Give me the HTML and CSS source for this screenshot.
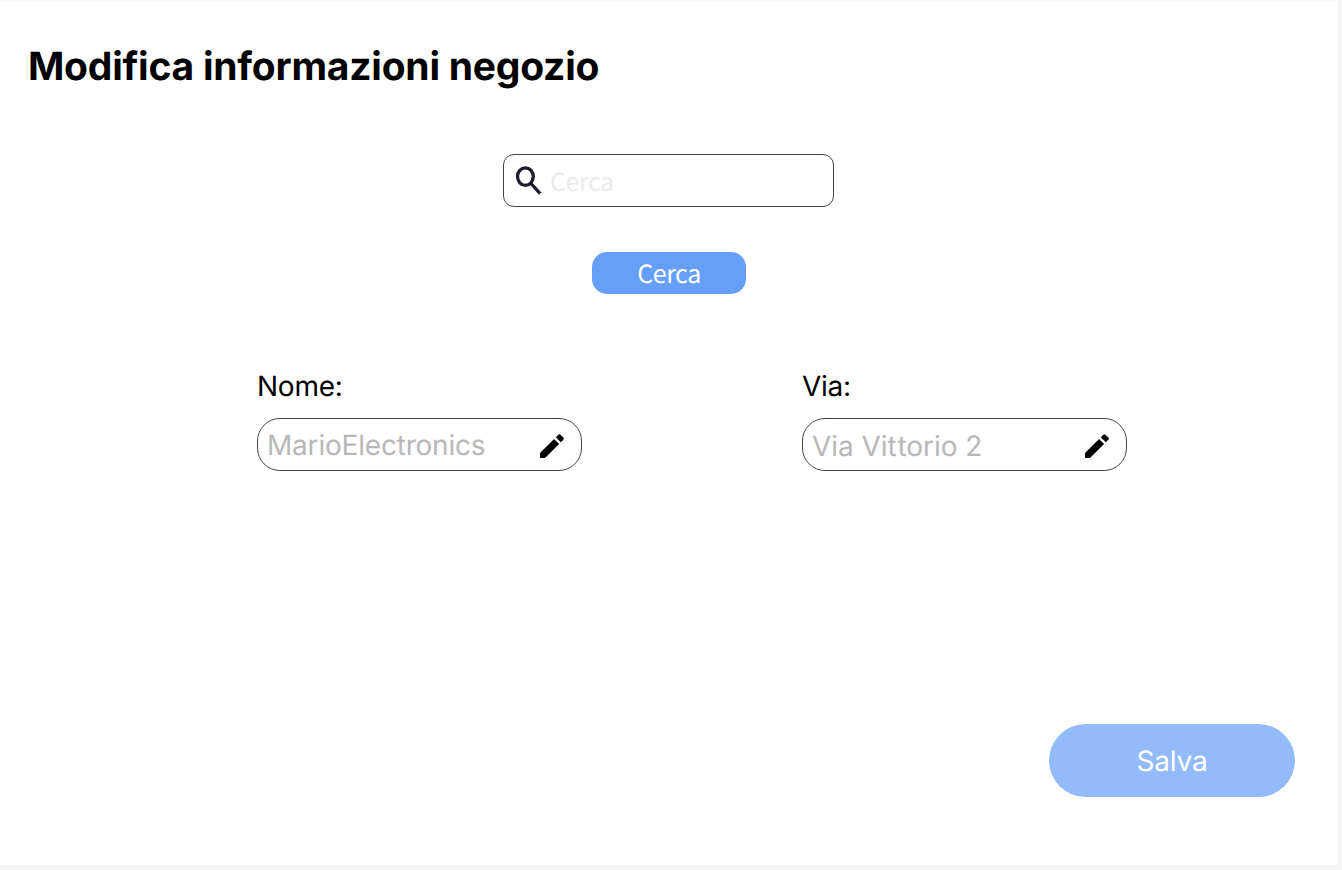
FILE: index.html
```html
<!DOCTYPE html>
<html lang="it">
<head>
<meta charset="utf-8">
<title>Modifica informazioni negozio</title>
<link rel="stylesheet" href="styles.css">
</head>
<body>
<main class="page">
  <h1 class="title">Modifica informazioni negozio</h1>
  <div class="search">
    <svg class="search-icon" viewBox="0 0 28 30" fill="none" stroke="#1d1b2e"><ellipse cx="10.4" cy="11.6" rx="7.9" ry="8.8" stroke-width="3.3"/><path d="M15.5 18L25.2 28.7" stroke-width="3.3"/></svg>
    <span class="search-text">Cerca</span>
  </div>
  <button class="search-button">Cerca</button>
  <div class="fields">
    <div class="field">
      <div class="label">Nome:</div>
      <div class="input"><span class="value">MarioElectronics</span>
        <svg class="pencil" viewBox="3 3 18 18"><path d="M3 17.25V20.3Q3 21 3.7 21H6.75L17.3 10.45l-3.75-3.75zM20.5 7.25q.8-.8 0-1.6l-2.15-2.15q-.8-.8-1.6 0l-1.9 1.9 3.75 3.75z"/></svg></div>
    </div>
    <div class="field">
      <div class="label">Via:</div>
      <div class="input"><span class="value address">Vi<span>a Vi</span><span class="loose">t</span>torio 2</span>
        <svg class="pencil" viewBox="3 3 18 18"><path d="M3 17.25V20.3Q3 21 3.7 21H6.75L17.3 10.45l-3.75-3.75zM20.5 7.25q.8-.8 0-1.6l-2.15-2.15q-.8-.8-1.6 0l-1.9 1.9 3.75 3.75z"/></svg></div>
    </div>
  </div>
  <button class="save">Salva</button>
</main>
</body>
</html>
```
FILE: styles.css
```css
* { box-sizing: border-box; }
body { margin: 0; background: #f5f5f5; font-family: Inter, sans-serif; color: #000; text-rendering: geometricPrecision; }
button { text-rendering: inherit; }
.page { width: 1338px; height: 865px; background: #fff; border-top: 1px solid #f9f9f9; display: flex; flex-direction: column; overflow: hidden; }
.title { margin: 42px 0 0 28px; font-size: 39px; line-height: 48px; font-weight: 700; letter-spacing: -0.23px; white-space: nowrap; }
.search { margin: 63px 0 0 503px; width: 331px; height: 53px; flex: none; border: 1px solid #444; border-radius: 11px; display: flex; align-items: center; padding-left: 11px; }
.search-icon { width: 28px; height: 30px; margin-top: -2px; }
.search-text { margin-left: 7px; font: 400 25px/36px "Noto Sans CJK SC", sans-serif; letter-spacing: -0.45px; color: #ebebeb; }
.search-button { margin: 45px 0 0 592px; width: 154px; height: 42px; flex: none; border: 0; border-radius: 15px; background: #669ff9; color: #fff; font: 400 25px/36px "Noto Sans CJK SC", sans-serif; letter-spacing: -0.45px; padding: 0; }
.fields { display: flex; gap: 220px; margin: 75px 0 0 257px; }
.field { width: 325px; }
.label { font-size: 28px; line-height: 34px; letter-spacing: -0.25px; }
.input { margin-top: 15px; height: 53px; border: 1px solid #444; border-radius: 23px; display: flex; align-items: center; justify-content: space-between; padding: 0 17px 0 9px; font-size: 28px; color: #b8b8b8; }
.value { letter-spacing: -0.2px; }
.address { padding-top: 2px; letter-spacing: -0.05px; }
.loose { letter-spacing: 0.8px; }
.pencil { width: 24px; height: 24px; margin-top: 3px; fill: #000; }
.save { margin: 253px 0 0 1049px; width: 246px; height: 73px; flex: none; border: 0; border-radius: 37px; background: #93bafa; color: #fff; font: 28px/34px Inter, sans-serif; letter-spacing: -0.2px; padding: 0; }
```
